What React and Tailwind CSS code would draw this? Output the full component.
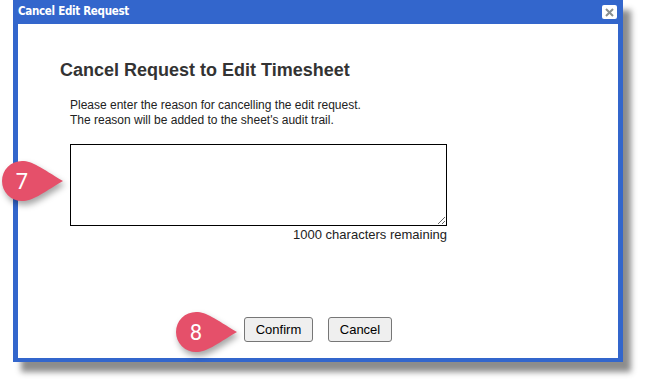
import React from 'react';

function Marker({ n, className }) {
  return (
    <div className={`absolute ${className}`}>
      <svg width="66" height="46" viewBox="0 0 66 46" className="drop-shadow-[2px_4px_3px_rgba(0,0,0,0.35)]">
        <path
          d="M21 1 C32 1 40 8 62 21 C40 34 32 41 21 41 A20 20 0 0 1 21 1 Z"
          fill="#e5506a"
        />
      </svg>
      <span className="absolute left-0 top-0 w-[42px] h-[42px] flex items-center justify-center text-white text-[22px] font-['Roboto',sans-serif]">
        {n}
      </span>
    </div>
  );
}

export default function App() {
  return (
    <div className="relative w-[646px] h-[385px] bg-white font-['Liberation_Sans',Arial,sans-serif] overflow-hidden">
      <div className="ml-[13px] w-[610px] h-[362px] flex flex-col bg-[#3366cc] shadow-[8px_10px_6px_rgba(0,0,0,0.45)]">
        {/* Title bar */}
        <div className="h-[24px] flex items-center justify-between pl-[5px] pr-[6px]">
          <span className="text-white text-[11.5px] font-bold tracking-[-0.3px] font-['DejaVu_Sans_Condensed','Liberation_Sans',sans-serif]">
            Cancel Edit Request
          </span>
          <div className="w-[15px] h-[14px] bg-white rounded-[2px] flex items-center justify-center">
            <svg width="9" height="9" viewBox="0 0 9 9">
              <path d="M1 1 L8 8 M8 1 L1 8" stroke="#8a9090" strokeWidth="2" />
            </svg>
          </div>
        </div>

        {/* Body */}
        <div className="mx-[5px] mb-[4px] flex-1 bg-white flex flex-col">
          <h1 className="mt-[35px] ml-[42px] text-[18px] font-bold text-[#333] leading-[22px]">
            Cancel Request to Edit Timesheet
          </h1>
          <div className="mt-[17px] ml-[52px] text-[12px] leading-[15px] text-[#222]">
            <p>Please enter the reason for cancelling the edit request.</p>
            <p>The reason will be added to the sheet's audit trail.</p>
          </div>
          <div className="mt-[16px] ml-[52px] w-[377px] flex flex-col items-end">
            <textarea className="w-[377px] h-[82px] border border-black resize-y bg-white outline-none" />
            <span className="mt-[1px] text-[13px] leading-[15px] text-[#222]">1000 characters remaining</span>
          </div>
          <div className="mt-[75px] flex justify-center gap-[15px]">
            <button className="w-[69px] h-[25px] bg-[#efefef] border border-[#767676] rounded-[3px] text-[13px] text-black">
              Confirm
            </button>
            <button className="w-[64px] h-[25px] bg-[#efefef] border border-[#767676] rounded-[3px] text-[13px] text-black">
              Cancel
            </button>
          </div>
        </div>
      </div>

      <Marker n="7" className="left-[1px] top-[160px]" />
      <Marker n="8" className="left-[175px] top-[311px]" />
    </div>
  );
}
